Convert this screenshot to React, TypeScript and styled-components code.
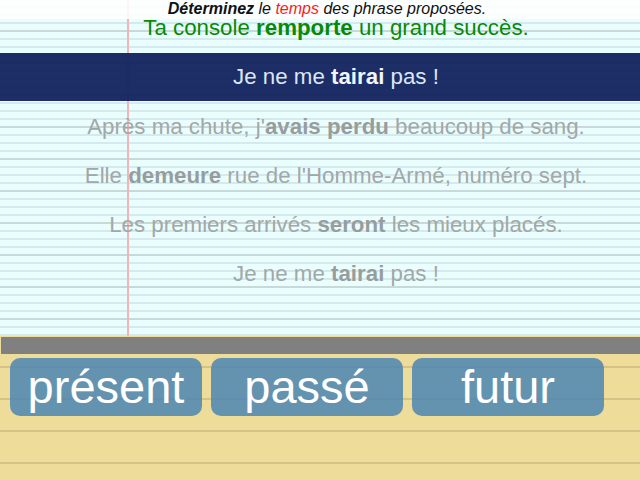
import React from "react";
import styled, { createGlobalStyle } from "styled-components";

const Global = createGlobalStyle`
  html, body { margin: 0; padding: 0; background: #eedc9a; }
  body { font-family: "Liberation Sans", Arial, sans-serif; }
`;

const Page = styled.div`
  width: 640px;
  height: 480px;
  overflow: hidden;
  display: flex;
  flex-direction: column;
`;

const Paper = styled.section`
  position: relative;
  height: 336px;
  flex: none;
  background-color: #ebfefe;
  background-image:
    linear-gradient(to bottom, transparent 30px, #c9d9d9 30px, #c9d9d9 32px),
    linear-gradient(to bottom, transparent 6px, #d5eaee 6px, #d5eaee 8px);
  background-size: 100% 32px, 100% 8px;
  display: flex;
  flex-direction: column;
  &::before {
    content: "";
    position: absolute;
    left: 127px;
    top: 0;
    bottom: 0;
    width: 2px;
    background: #f2b4b6;
  }
`;

const Instruction = styled.header`
  position: relative;
  z-index: 1;
  height: 19px;
  padding-left: 14px;
  box-sizing: border-box;
  background: rgba(255, 255, 255, 0.88);
  text-align: center;
  font-style: italic;
  font-size: 16px;
  line-height: 17px;
  color: #111;
`;

const Red = styled.span`
  color: #ff1a1a;
`;

const Current = styled.div`
  position: relative;
  z-index: 1;
  height: 34px;
  padding-left: 32px;
  text-align: center;
  font-size: 22.3px;
  line-height: 18px;
  color: #088a08;
`;

const Band = styled.div`
  position: relative;
  z-index: 1;
  height: 48px;
  padding-left: 32px;
  display: flex;
  align-items: center;
  justify-content: center;
  background: rgba(20, 36, 96, 0.96);
  color: #dce6f6;
  font-size: 22.3px;
  b { color: #f2f6ff; }
`;

const Sentence = styled.div`
  position: relative;
  z-index: 1;
  height: 49px;
  box-sizing: border-box;
  padding: 2px 0 0 32px;
  display: flex;
  align-items: center;
  justify-content: center;
  color: #a2a8a8;
  font-size: 22.3px;
  b { color: #979d9d; }
`;

const Bottom = styled.section`
  flex: 1;
  background-color: #eedc9a;
  background-image: linear-gradient(to bottom, transparent 30px, #d6c287 30px, #d6c287 32px);
  background-size: 100% 32px;
  padding-top: 1px;
  display: flex;
  flex-direction: column;
`;

const Progress = styled.div`
  height: 17px;
  margin-left: 1px;
  background: #808080;
`;

const Buttons = styled.div`
  display: flex;
  gap: 9px;
  padding: 4px 0 0 10px;
`;

const Choice = styled.button`
  width: 192px;
  height: 58px;
  border: none;
  border-radius: 10px;
  background: rgba(70, 130, 180, 0.82);
  color: #fff;
  font-family: "Liberation Sans", Arial, sans-serif;
  font-size: 47px;
  line-height: 58px;
  padding: 0;
  cursor: pointer;
`;

const sentences: [string, string, string][] = [
  ["Après ma chute, j'", "avais perdu", " beaucoup de sang."],
  ["Elle ", "demeure", " rue de l'Homme-Armé, numéro sept."],
  ["Les premiers arrivés ", "seront", " les mieux placés."],
  ["Je ne me ", "tairai", " pas !"],
];

export default function App() {
  return (
    <Page>
      <Global />
      <Paper>
        <Instruction>
          <b>Déterminez</b> le <Red>temps</Red> des phrase proposées.
        </Instruction>
        <Current>
          Ta console <b>remporte</b> un grand succès.
        </Current>
        <Band>
          <span>
            Je ne me <b>tairai</b> pas !
          </span>
        </Band>
        {sentences.map(([a, b, c], i) => (
          <Sentence key={i}>
            <span>
              {a}
              <b>{b}</b>
              {c}
            </span>
          </Sentence>
        ))}
      </Paper>
      <Bottom>
        <Progress />
        <Buttons>
          <Choice>présent</Choice>
          <Choice>passé</Choice>
          <Choice>futur</Choice>
        </Buttons>
      </Bottom>
    </Page>
  );
}
